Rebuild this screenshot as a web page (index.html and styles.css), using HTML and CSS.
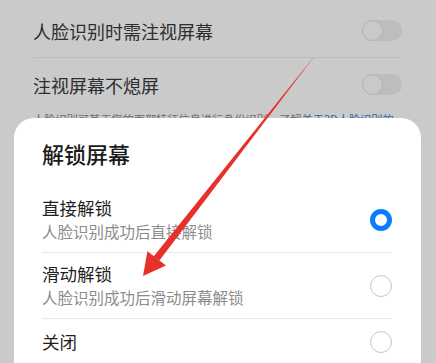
FILE: index.html
```html
<!DOCTYPE html>
<html lang="zh-CN">
<head>
<meta charset="utf-8">
<title>解锁屏幕</title>
<link rel="stylesheet" href="styles.css">
</head>
<body>
<div class="screen">
  <div class="settings">
    <div class="setting">
      <span class="setting-label">人脸识别时需注视屏幕</span>
      <span class="toggle"><span class="knob"></span></span>
    </div>
    <div class="setting">
      <span class="setting-label">注视屏幕不熄屏</span>
      <span class="toggle"><span class="knob"></span></span>
    </div>
    <p class="desc">人脸识别可基于您的面部特征信息进行身份识别。了解<span class="link">关于3D人脸识别的</span></p>
  </div>

  <div class="sheet">
    <h2 class="sheet-title">解锁屏幕</h2>
    <div class="option">
      <div class="option-text">
        <div class="option-title">直接解锁</div>
        <div class="option-sub">人脸识别成功后直接解锁</div>
      </div>
      <span class="radio checked"></span>
    </div>
    <div class="option">
      <div class="option-text">
        <div class="option-title">滑动解锁</div>
        <div class="option-sub">人脸识别成功后滑动屏幕解锁</div>
      </div>
      <span class="radio"></span>
    </div>
    <div class="option single">
      <div class="option-text">
        <div class="option-title">关闭</div>
      </div>
      <span class="radio"></span>
    </div>
  </div>

  <svg class="arrow" width="436" height="363" viewBox="0 0 436 363">
    <polygon points="313.3,57.7 312.7,58.3 153.6,256.6 159.4,260.6" fill="#e8302b"/>
    <polygon points="143,276 147.4,251.2 166,265.6" fill="#e8302b"/>
  </svg>
</div>
</body>
</html>
```

FILE: styles.css
```css
* { box-sizing: border-box; }
html, body {
  margin: 0;
  padding: 0;
  width: 436px;
  height: 363px;
  overflow: hidden;
}
body {
  background: #cacaca;
  font-family: "Noto Sans CJK SC", "Noto Sans", sans-serif;
}
.screen {
  position: relative;
  width: 436px;
  height: 363px;
  overflow: hidden;
}
.settings {
  padding: 4px 35px 0 33px;
}
.setting {
  display: flex;
  align-items: center;
  justify-content: space-between;
  height: 54px;
  border-bottom: 1px solid #bdbdbd;
}
.setting + .setting {
  border-bottom: none;
  height: 53px;
}
.setting-label {
  font-size: 18px;
  line-height: 24px;
  color: #2e2e2e;
}
.toggle {
  width: 40px;
  height: 21px;
  border-radius: 11px;
  background: #bdbdbd;
  display: flex;
  align-items: center;
  margin-right: -1px;
}
.knob {
  width: 21px;
  height: 21px;
  border-radius: 50%;
  background: #c9c9c9;
  border: 1.5px solid #b3b3b3;
}
.desc {
  margin: -1px 0 0;
  font-size: 11.2px;
  line-height: 18px;
  color: #6c6c6c;
  white-space: nowrap;
}
.link { color: #2f64a8; }

.sheet {
  position: absolute;
  top: 118px;
  left: 14px;
  right: 15px;
  height: 270px;
  background: #ffffff;
  border-radius: 20px 20px 0 0;
  padding: 21px 29px 0 28px;
}
.sheet-title {
  margin: 0 0 20px;
  font-size: 22px;
  line-height: 28px;
  font-weight: 500;
  color: #1b1b1b;
}
.option {
  display: flex;
  align-items: center;
  justify-content: space-between;
  padding: 10px 0 9px;
  border-bottom: 1px solid #e8e8e8;
}
.option.single {
  border-bottom: none;
  padding-top: 12px;
}
.option-title {
  font-size: 17.5px;
  line-height: 22px;
  color: #1f1f1f;
}
.option-sub {
  font-size: 15.5px;
  line-height: 24px;
  color: #8c8c8c;
}
.radio {
  width: 22px;
  height: 22px;
  border-radius: 50%;
  border: 1.5px solid #c6c6c6;
  flex: none;
}
.radio.checked {
  border: 5.5px solid #0a7cff;
}
.arrow {
  position: absolute;
  left: 0;
  top: 0;
  pointer-events: none;
}
```
